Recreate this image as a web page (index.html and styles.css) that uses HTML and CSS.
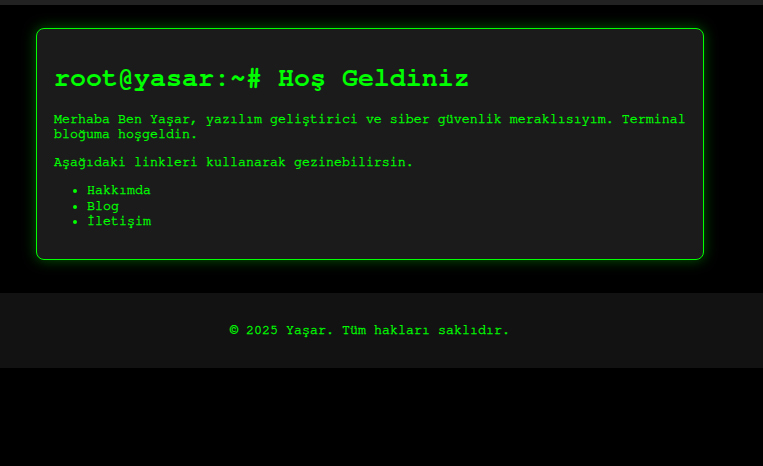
FILE: index.html
```html
<!DOCTYPE html>
<html lang="tr">
<head>
<meta charset="utf-8">
<title>root@yasar</title>
<link rel="stylesheet" href="styles.css">
</head>
<body>
<header class="topbar"></header>
<main class="page">
  <section class="terminal">
    <h1 class="title">root@yasar:~# Hoş Geldiniz</h1>
    <p class="text">Merhaba Ben Yaşar, yazılım geliştirici ve siber güvenlik meraklısıyım. Terminal bloğuma hoşgeldin.</p>
    <p class="text">Aşağıdaki linkleri kullanarak gezinebilirsin.</p>
    <ul class="links">
      <li><a href="#">Hakkımda</a></li>
      <li><a href="#">Blog</a></li>
      <li><a href="#">İletişim</a></li>
    </ul>
  </section>
</main>
<footer class="footer">
  <p class="copy">© 2025 Yaşar. Tüm hakları saklıdır.</p>
</footer>
</body>
</html>
```
FILE: styles.css
```css
html, body {
  margin: 0;
  padding: 0;
  background: #000;
}
body {
  font-family: FreeMono, "Liberation Mono", monospace;
  font-size: 13.33px;
  color: #00ff00;
}
.topbar {
  height: 5px;
  background: #222;
}
.page {
  padding: 23px 59px 33px 36px;
}
.terminal {
  background: #1b1b1b;
  border: 1px solid #00ff00;
  border-radius: 8px;
  box-shadow: 0 0 14px rgba(0, 255, 0, 0.35);
  padding: 17px;
}
.title {
  font-size: 26.67px;
  font-weight: bold;
  margin: 17px 0 19px;
  line-height: 30px;
}
.text,
.links,
.copy {
  -webkit-text-stroke: 0.35px #00ff00;
}
.text {
  margin: 0 0 13px;
  line-height: 15px;
}
.links {
  margin: 0 0 12px;
  padding-left: 33px;
  line-height: 15.5px;
}
.links a {
  color: #00ff00;
  text-decoration: none;
}
.footer {
  background: #121212;
  padding: 30px 23px 30px 0;
  text-align: center;
}
.copy {
  margin: 0;
  line-height: 15px;
}
```
